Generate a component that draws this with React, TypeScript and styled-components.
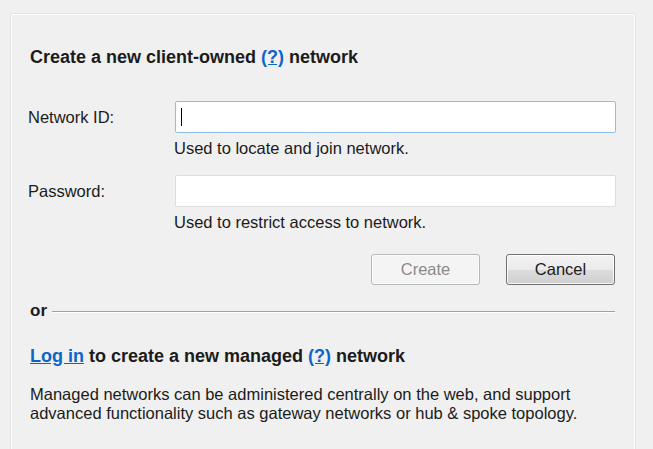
import React from "react";
import styled, { createGlobalStyle } from "styled-components";

const Global = createGlobalStyle`
  html, body { margin: 0; padding: 0; background: #f0f0f0; overflow: hidden; }
  body { font-family: "Liberation Sans", Arial, sans-serif; font-size: 16.5px; color: #1b1b1b; }
`;

const Page = styled.div`
  width: 653px;
  height: 449px;
  padding: 13px 0 0 10px;
  box-sizing: border-box;
  overflow: hidden;
`;

const Panel = styled.div`
  width: 626px;
  height: 470px;
  box-sizing: border-box;
  border: 1px solid #dce3e9;
  border-radius: 2px;
  box-shadow: inset 0 0 0 1px #ffffff;
  padding: 34px 19px 0 19px;
  display: flex;
  flex-direction: column;
`;

const Heading = styled.div<{ $mt?: number }>`
  font-weight: bold;
  font-size: 18px;
  line-height: 18px;
  height: 18px;
  white-space: nowrap;
  margin-top: ${(p) => p.$mt ?? 0}px;
`;

const Link = styled.a`
  color: #0b66c9;
  text-decoration: underline;
  cursor: pointer;
`;

const Form = styled.div`
  display: grid;
  grid-template-columns: 147px 1fr;
  margin-top: 35px;
  margin-left: -2px;
`;

const Label = styled.div`
  align-self: center;
  line-height: 18px;
`;

const TextBox = styled.div<{ $focused?: boolean }>`
  height: 32px;
  box-sizing: border-box;
  background: #ffffff;
  border: 1px solid ${(p) => (p.$focused ? "#8fbde9" : "#dadde2")};
  border-radius: 2px;
  display: flex;
  align-items: center;
  padding-left: 5px;
`;

const Caret = styled.span`
  width: 1px;
  height: 18px;
  background: #000;
`;

const Hint = styled.div<{ $last?: boolean }>`
  grid-column: 2;
  line-height: 18px;
  margin-top: 6px;
  margin-bottom: ${(p) => (p.$last ? 0 : 18)}px;
  margin-left: -1px;
`;

const Buttons = styled.div`
  display: flex;
  justify-content: flex-end;
  gap: 26px;
  margin-top: 23px;
  margin-right: 1px;
`;

const Button = styled.button`
  width: 109px;
  height: 31px;
  box-sizing: border-box;
  border-radius: 3px;
  font-family: inherit;
  font-size: 16.5px;
  padding: 0;
  border: 1px solid #707070;
  color: #1b1b1b;
  background: linear-gradient(#f2f2f2 0%, #ebebeb 50%, #dddddd 51%, #cfcfcf 100%);
  box-shadow: inset 0 0 0 1px rgba(255, 255, 255, 0.8);
  &:disabled {
    border-color: #b5b9bc;
    color: #8a8a8a;
    background: #f4f4f4;
    box-shadow: inset 0 0 0 1px #fbfbfb;
  }
`;

const OrRow = styled.div`
  display: flex;
  align-items: center;
  gap: 5px;
  height: 18px;
  margin-top: 17px;
  margin-right: 1px;
  font-weight: bold;
  font-size: 17px;
`;

const Rule = styled.div`
  flex: 1;
  height: 1px;
  background: #a0a0a0;
  box-shadow: 0 1px 0 #ffffff;
`;

const Paragraph = styled.p`
  margin: 20px 0 0;
  line-height: 19px;
  white-space: nowrap;
`;

export default function App() {
  return (
    <>
      <Global />
      <Page>
        <Panel>
          <Heading>
            Create a new client-owned <Link>(?)</Link> network
          </Heading>
          <Form>
            <Label>Network ID:</Label>
            <TextBox $focused>
              <Caret />
            </TextBox>
            <Hint>Used to locate and join network.</Hint>
            <Label>Password:</Label>
            <TextBox />
            <Hint $last>Used to restrict access to network.</Hint>
          </Form>
          <Buttons>
            <Button disabled>Create</Button>
            <Button>Cancel</Button>
          </Buttons>
          <OrRow>
            or
            <Rule />
          </OrRow>
          <Heading $mt={27}>
            <Link>Log in</Link> to create a new managed <Link>(?)</Link> network
          </Heading>
          <Paragraph>
            Managed networks can be administered centrally on the web, and support
            <br />
            advanced functionality such as gateway networks or hub &amp; spoke topology.
          </Paragraph>
        </Panel>
      </Page>
    </>
  );
}
